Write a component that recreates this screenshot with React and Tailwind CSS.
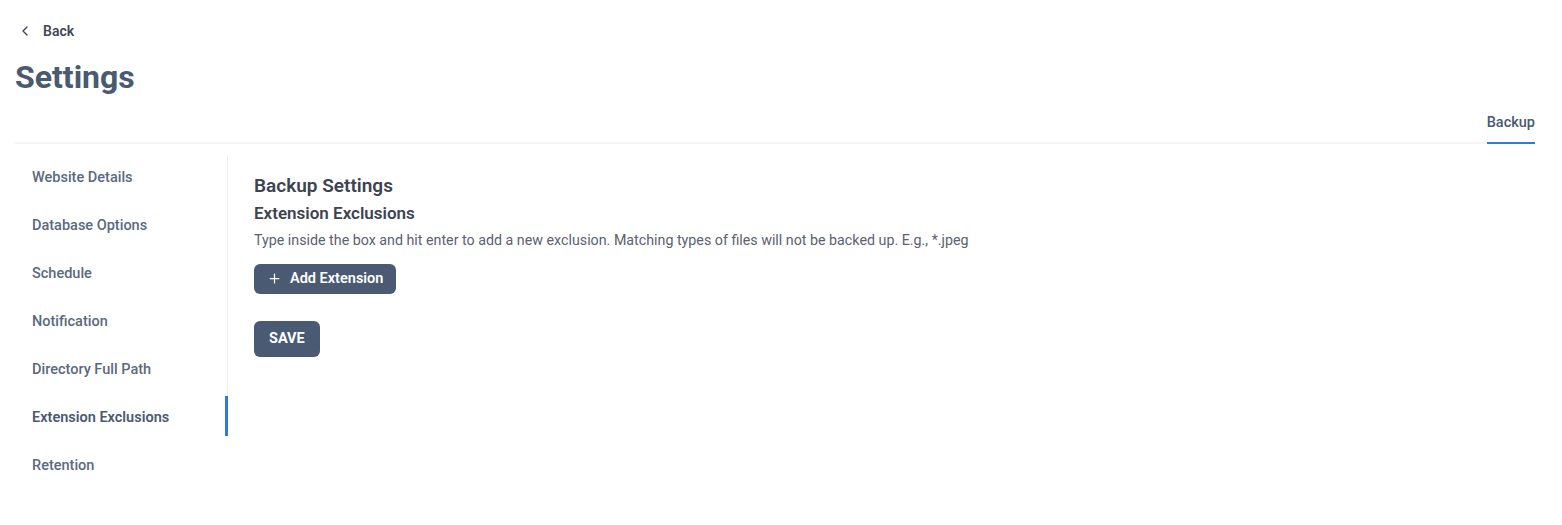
import { ChevronLeft, Plus } from "lucide-react";

const items = [
  "Website Details",
  "Database Options",
  "Schedule",
  "Notification",
  "Directory Full Path",
  "Extension Exclusions",
];

const NavItem = ({ label, active }) => (
  <div
    className={
      active
        ? "h-[40px] flex items-center pt-[4px] pl-[17px] text-[14.5px] font-semibold text-[#4a5a70] border-r-[3px] border-[#2f7bd6] -mr-px"
        : "h-[40px] flex items-center pt-[4px] pl-[17px] text-[14.5px] font-medium text-[#5a6a7e]"
    }
  >
    {label}
  </div>
);

const App = () => {
  const active = "Extension Exclusions";

  return (
    <div className="min-h-[525px] bg-white pl-[15px] pr-[27px] font-['Roboto',sans-serif]">
      <div className="pt-[20px]">
        <button className="flex items-center gap-[10px] h-[22px] text-[14px] font-semibold text-[#3f4957]">
          <ChevronLeft size={16} strokeWidth={2} className="ml-[2px]" />
          Back
        </button>
      </div>
      <h1 className="mt-[16px] text-[32px] leading-[38px] font-bold text-[#4a5a70]">Settings</h1>

      <div className="mt-[16px] flex justify-end border-b-2 border-[#f4f4f5]">
        <div className="-mb-[2px] border-b-2 border-[#2f7bd6] pb-[8px] text-[14.5px] font-medium text-[#4a5a70]">
          Backup
        </div>
      </div>

      <div className="mt-[12px] flex">
        <div className="w-[213px] shrink-0 flex flex-col gap-[8px] pb-[20px]">
          <div className="flex flex-col gap-[8px] border-r border-[#efefef]">
            {items.map((item) => (
              <NavItem key={item} label={item} active={item === active} />
            ))}
          </div>
          <NavItem label="Retention" />
        </div>

        <div className="pl-[26px] pt-[18px]">
          <h2 className="text-[19px] leading-[24px] font-semibold text-[#3d4450]">Backup Settings</h2>
          <h3 className="mt-[5px] text-[17px] leading-[20px] font-semibold text-[#3d4450]">Extension Exclusions</h3>
          <p className="mt-[7px] text-[14.25px] leading-[20px] text-[#5b6270]">
            Type inside the box and hit enter to add a new exclusion. Matching types of files will not be backed up. E.g., *.jpeg
          </p>
          <button className="mt-[14px] flex items-center gap-[8px] h-[30px] px-[13px] rounded-[6px] bg-[#4a5a72] text-white text-[14.5px] font-semibold">
            <Plus size={15} strokeWidth={2} />
            Add Extension
          </button>
          <button className="mt-[27px] h-[36px] px-[15px] rounded-[6px] bg-[#4a5a72] text-white text-[14.5px] font-bold">
            SAVE
          </button>
        </div>
      </div>
    </div>
  );
};

export default App;
